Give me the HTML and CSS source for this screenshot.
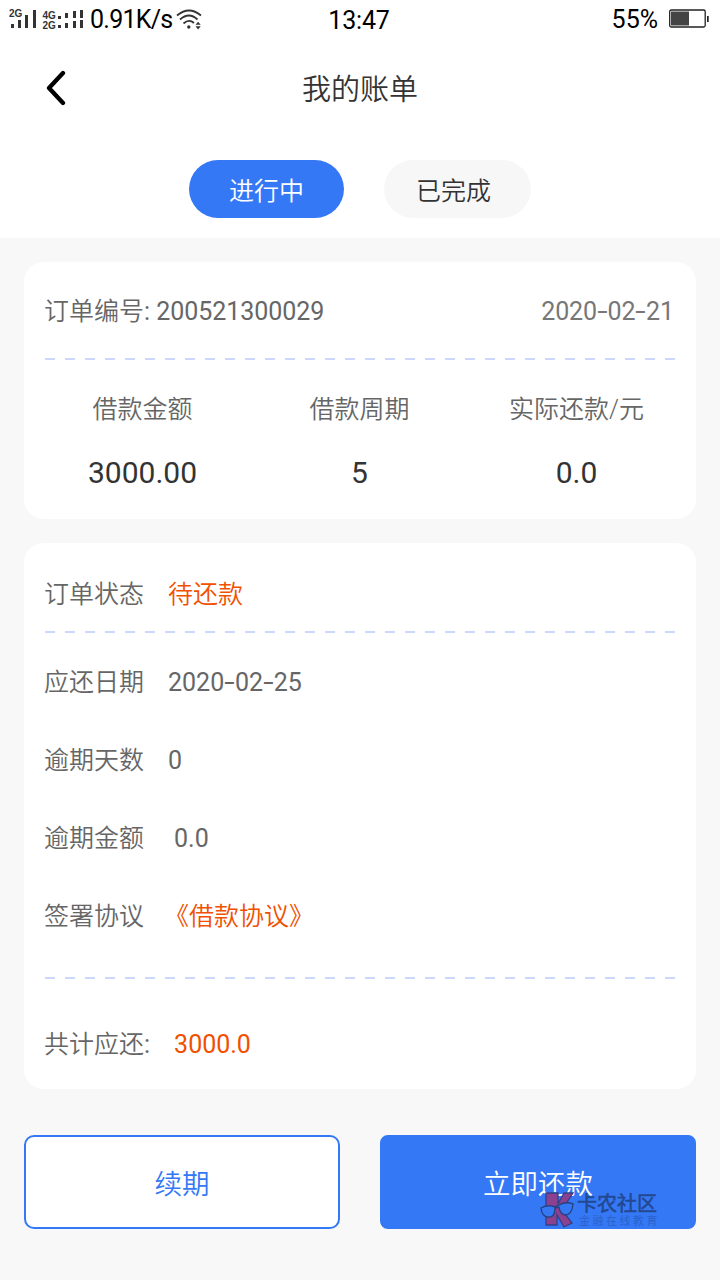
FILE: index.html
```html
<!DOCTYPE html>
<html lang="zh-CN">
<head>
<meta charset="UTF-8">
<title>我的账单</title>
<link rel="stylesheet" href="styles.css">
</head>
<body>
<div class="status">
  <div class="status-left">
    <svg class="signals" width="76" height="24" viewBox="0 0 76 24">
      <g class="net"><text x="0" y="10">2G</text><text x="33.500" y="12">4G</text><text x="33.500" y="22">2G</text></g>
      <g fill="#333">
        <path d="M2 17h3v4h-3zM9 13h3v8h-3zM16 8h3v13h-3zM24 3h3v18h-3z"/>
        <path d="M49 9h3v3h-3zM56 6h3v5h-3zM64 4h3v7h-3zM71 3h3v8h-3zM49 18h3v3h-3zM56 16h3v5h-3zM64 14h3v7h-3zM71 13h3v8h-3z"/>
      </g>
    </svg>
    <span class="speed">0.91K/s</span>
    <svg class="wifi" width="26" height="21" viewBox="0 0 26 21" fill="none" stroke="#333" stroke-width="1.800">
      <path d="M1 6.500Q13-3.500 25 6.500M4 10.500Q13 2.500 21.500 10.500M7.500 14.500Q13 9.500 18 14"/>
      <circle cx="12.800" cy="18" r="1.700" fill="#333" stroke="none"/>
      <path d="M19.500 15.800l2.600-3.100 2.600 3.100zM19.500 17.300l2.600 3.100 2.600-3.100z" fill="#333" stroke="none"/>
    </svg>
  </div>
  <span class="clock">13:47</span>
  <div class="status-right">
    <span class="percent">55%</span>
    <svg class="battery" width="41" height="20" viewBox="0 0 41 20">
      <rect x="1.700" y="1" width="35.500" height="17" rx="1.500" fill="#fff" stroke="#222" stroke-width="1.300"/>
      <path d="M3 2.500h18v14h-18z" fill="#444"/><path d="M39 7h1.700v6h-1.700z" fill="#222"/>
    </svg>
  </div>
</div>
<header class="nav">
  <svg class="back" width="22" height="36" viewBox="0 0 22 36"><path d="M18 3L4 18L18 33" fill="none" stroke="#000" stroke-width="4.300" stroke-linecap="round" stroke-linejoin="round"/></svg>
  <h1>我的账单</h1>
</header>
<nav class="tabs">
  <button class="tab tab-active">进行中</button>
  <button class="tab">已完成</button>
</nav>
<main>
  <section class="card summary">
    <div class="order"><span>订单编号<span class="num order-id">: 200521300029</span></span><span class="order-date num">2020<i>-</i>02<i>-</i>21</span></div>
    <div class="rule"></div>
    <div class="figures">
      <div><p>借款金额</p><strong>3000.00</strong></div>
      <div><p>借款周期</p><strong>5</strong></div>
      <div><p>实际还款/元</p><strong>0.0</strong></div>
    </div>
  </section>
  <section class="card details">
    <div class="row row-status"><span>订单状态</span><span class="hot">待还款</span></div>
    <div class="rule"></div>
    <div class="rows">
      <div class="row"><span>应还日期</span><span class="num">2020<i>-</i>02<i>-</i>25</span></div>
      <div class="row"><span>逾期天数</span><span class="num">0</span></div>
      <div class="row"><span>逾期金额</span><span class="num amount">0.0</span></div>
      <div class="row"><span>签署协议</span><a class="hot agreement">《借款协议》</a></div>
    </div>
    <div class="rule"></div>
    <div class="row row-total"><span>共计应还<span class="num">:</span></span><span class="hot num amount">3000.0</span></div>
  </section>
  <div class="actions">
    <button class="action">续期</button>
    <button class="action action-main">立即还款
      <span class="mark">
        <svg width="36" height="37" viewBox="0 0 36 37">
          <path d="M6 2h12v11L24 2h9L22 19l10 13-8 4-7-12v10H6z" fill="#8b4090" stroke="#333f86" stroke-width="1.300"/>
          <path d="M1 17q7-4 14-1l4-2q7-4 14-1-1 11-8 11-5-1-6-8l-4 1q0 10-7 9-6 0-7-9z" fill="#3478f6" stroke="#29427f" stroke-width="1.400"/>
        </svg>
        <span class="mark-text"><b>卡农社区</b><small>金融在线教育</small></span>
      </span>
    </button>
  </div>
</main>
</body>
</html>
```
FILE: styles.css
```css
* { box-sizing: border-box; }
body { margin: 0; width: 720px; height: 1280px; overflow: hidden; background: #fff; color: #666; font: 350 25px/38px Roboto, "Noto Sans CJK SC DemiLight", "Noto Sans CJK SC", sans-serif; }
h1, p { margin: 0; font-weight: 350; }
button { font: inherit; border: 0; padding: 0; }
.num { font-weight: 380; }
.status { display: grid; grid-template-columns: 1fr auto 1fr; align-items: center; height: 38px; padding: 0 11px 0 9px; color: #000; font-weight: 400; line-height: 38px; }
.status-left, .status-right { display: flex; align-items: center; }
.status-right { justify-content: flex-end; gap: 10px; }
.signals { margin: -3px 5px 0 0; }
.net text { font: bold 10px "Liberation Sans", sans-serif; fill: #333; }
.speed { letter-spacing: -0.75px; }
.wifi { margin: -2px 0 0 4px; }
.clock { padding-top: 2px; letter-spacing: -0.2px; }
.battery { margin-top: -2px; }
.nav { display: flex; align-items: center; justify-content: center; position: relative; height: 100px; }
.back { position: absolute; left: 45px; top: 32px; }
.nav h1 { padding-top: 4px; font-size: 29px; line-height: 40px; color: #333; }
.tabs { display: flex; justify-content: center; gap: 40px; height: 100px; padding-top: 22px; }
.tab { width: 147px; height: 58px; border-radius: 29px; padding: 5px 8px 0 0; background: #f7f7f7; color: #333; }
.tab-active { width: 155px; padding-right: 0; background: #3478f6; color: #fff; }
main { height: 1042px; padding: 24px; background: #f8f8f8; }
.card { background: #fff; border-radius: 20px; }
.summary { height: 257px; }
.details { height: 546px; margin-top: 24px; }
.order { display: flex; justify-content: space-between; height: 96px; padding: 31px 22px 0 20px; }
.order-id { letter-spacing: -0.05px; }
.order-date { color: #777; letter-spacing: -0.1px; }
i { display: inline-block; font-style: normal; margin: 0 1.9px; transform: scaleX(1.5); }
.rule { height: 2px; margin: 0 21px; background: repeating-linear-gradient(90deg, #cbd8fc 0 10px, transparent 10px 20px); }
.figures { display: grid; grid-template-columns: repeat(3, 217px); padding: 31px 10px 0; text-align: center; }
.figures strong { display: block; margin-top: 25px; font-size: 30px; font-weight: 400; line-height: 38px; color: #333; }
.row { display: flex; gap: 24px; height: 38px; padding-left: 20px; }
.row-status { height: 88px; padding-top: 33px; }
.rows { display: grid; gap: 40px; padding-top: 31px; height: 344px; align-content: start; }
.row-total { padding-top: 47px; height: 85px; }
.hot { color: #f05000; }
.amount { margin-left: 6px; }
.row-total .amount { margin-left: 0; }
.agreement { margin-left: -4px; }
.actions { display: flex; gap: 40px; margin-top: 46px; }
.action { position: relative; width: 316px; height: 94px; padding-top: 5px; border: 2px solid #3478f6; border-radius: 10px; background: #fff; color: #3478f6; font-size: 27.5px; }
.action-main { border-radius: 8px; background: #3478f6; color: #fff; }
.mark { position: absolute; left: 158px; top: 54px; display: flex; color: #234993; }
.mark-text { display: flex; flex-direction: column; padding: 1px 0 0 1px; text-align: left; }
.mark b { font-size: 20px; line-height: 24px; font-weight: 900; }
.mark small { margin-left: 2px; font-size: 11px; line-height: 12px; letter-spacing: 2.5px; color: #2b60c6; font-weight: 500; }
```
